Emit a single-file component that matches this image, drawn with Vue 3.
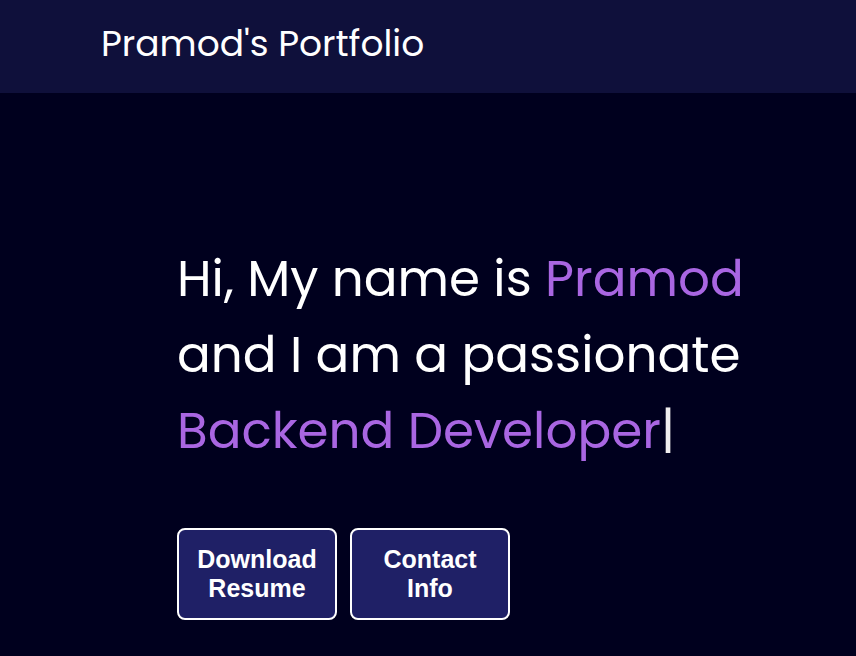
<script setup>
const intro = {
  name: 'Pramod',
  role: 'Backend Developer',
}
</script>

<template>
  <div class="page">
    <header class="navbar">
      <a class="brand" href="#home">Pramod's Portfolio</a>
    </header>
    <main id="home" class="hero">
      <h1 class="intro">
        <span class="line">Hi, My name is <span class="accent">{{ intro.name }}</span></span>
        <span class="line">and I am a passionate</span>
        <span class="line"><span class="accent">{{ intro.role }}</span><span class="cursor">|</span></span>
      </h1>
      <div class="actions">
        <button type="button" class="action">Download Resume</button>
        <button type="button" class="action">Contact Info</button>
      </div>
    </main>
  </div>
</template>

<style>
body {
  background: #00001e;
}
</style>

<style scoped>
.page {
  min-height: 100vh;
  box-sizing: border-box;
  color: #ffffff;
  font-family: Poppins, "Open Sans", sans-serif;
}

.navbar {
  display: flex;
  padding: 16px 101px 21px;
  background: #0f103b;
}

.brand {
  color: inherit;
  font-size: 36px;
  line-height: 56px;
  text-decoration: none;
}

.hero {
  padding: 148px 101px 36px 177px;
}

.intro {
  margin: 0;
  font-size: 50px;
  font-weight: 400;
  line-height: 76px;
}

.line {
  display: block;
  white-space: nowrap;
}

.accent {
  color: #a966e2;
}

.cursor {
  color: #f0eeee;
}

.actions {
  display: flex;
  gap: 13px;
  margin-top: 59px;
}

.action {
  width: 160px;
  padding: 15px 16px;
  border: 2px solid #ffffff;
  border-radius: 8px;
  background: #1f2066;
  color: #ffffff;
  font-family: "Liberation Sans", Arial, sans-serif;
  font-size: 25px;
  font-weight: 700;
  line-height: 29px;
}
</style>
